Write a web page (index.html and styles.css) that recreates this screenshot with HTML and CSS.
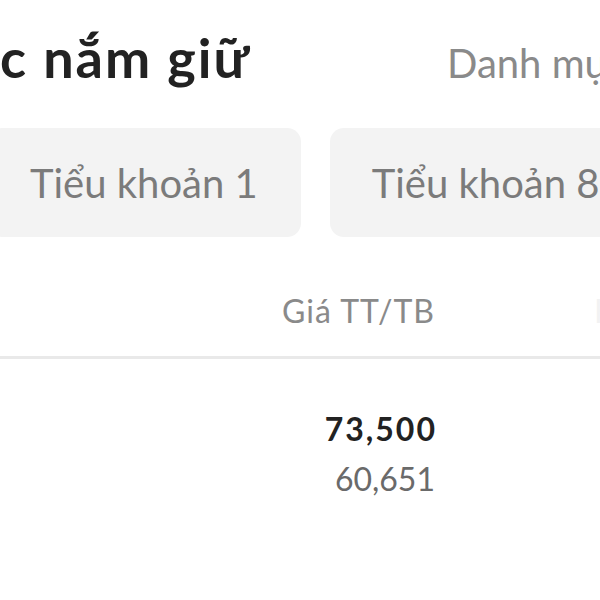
FILE: index.html
```html
<!DOCTYPE html>
<html lang="vi">
<head>
<meta charset="utf-8">
<link rel="stylesheet" href="styles.css">
</head>
<body>
<div class="screen">
  <header class="top">
    <h1 class="title">c nắm giữ</h1>
    <span class="alt">Danh mục</span>
  </header>
  <div class="tabs">
    <div class="tab">Tiểu khoản 1</div>
    <div class="tab">Tiểu khoản 8</div>
  </div>
  <div class="thead">
    <div class="spacer"></div>
    <div class="cell head">Giá TT/TB</div>
    <div class="cell head next">KL</div>
  </div>
  <div class="row">
    <div class="spacer"></div>
    <div class="cell">
      <div class="v1">73,500</div>
      <div class="v2">60,651</div>
    </div>
    <div class="cell next"></div>
  </div>
</div>
</body>
</html>
```
FILE: styles.css
```css
html, body {
  margin: 0;
  padding: 0;
  background: #fff;
}
body {
  font-family: "Lato", "Noto Sans", sans-serif;
  overflow: hidden;
  width: 600px;
  height: 600px;
}
.screen {
  width: 600px;
  height: 600px;
  overflow: hidden;
}
.top {
  display: flex;
  align-items: baseline;
  height: 108px;
  padding-top: 18px;
  box-sizing: border-box;
  white-space: nowrap;
}
.title {
  flex: none;
  margin: 0;
  font-size: 54px;
  font-weight: 700;
  letter-spacing: 2px;
  color: #222;
  line-height: 80px;
}
.alt {
  flex: none;
  font-size: 40px;
  color: #8a8a8a;
  margin-left: 196px;
}
.tabs {
  display: flex;
  gap: 29px;
  margin-left: -12px;
  margin-top: 20px;
  white-space: nowrap;
}
.tab {
  flex: none;
  height: 109px;
  display: flex;
  align-items: center;
  padding: 0 43px 0 42px;
  background: #f3f3f3;
  border-radius: 14px;
  font-size: 40px;
  color: #7b7b7b;
}
.thead {
  display: flex;
  height: 122px;
  align-items: center;
  border-bottom: 3px solid #e9e9e9;
  box-sizing: border-box;
}
.spacer {
  flex: 1;
}
.cell {
  width: 165px;
  text-align: right;
  flex: none;
}
.cell.next {
  width: 0;
  margin-left: 159px;
  padding-right: 6px;
  color: #f2f2f2;
  text-align: left;
}
.head {
  font-size: 32px;
  letter-spacing: 1px;
  color: #8a8a8a;
  padding-top: 28px;
}
.row {
  display: flex;
  padding-top: 50px;
}
.v1 {
  font-size: 32px;
  font-weight: 700;
  letter-spacing: 2px;
  margin-right: -2px;
  color: #222;
  line-height: 40px;
}
.v2 {
  font-size: 32px;
  color: #6a6a6a;
  line-height: 40px;
  margin-top: 10px;
}
```
